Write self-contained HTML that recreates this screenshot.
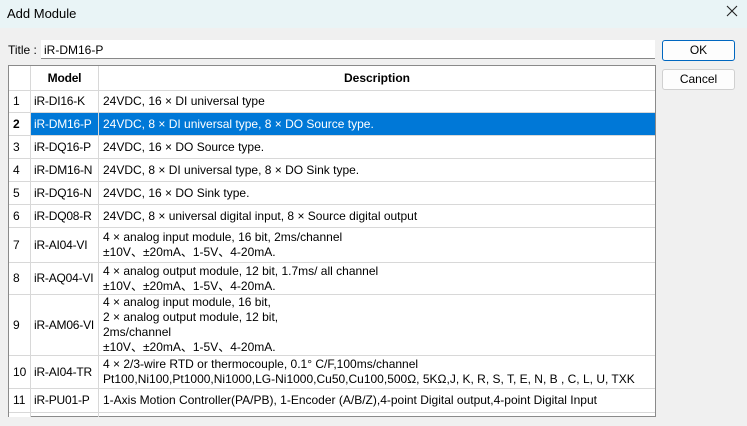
<!DOCTYPE html>
<html><head><meta charset="utf-8"><style>
*{margin:0;padding:0;box-sizing:border-box}
body{width:747px;height:426px;background:#f0f0f0;font-family:"Liberation Sans","Noto Sans CJK SC",sans-serif;font-size:12px;color:#000;position:relative;overflow:hidden}
.tb{position:absolute;left:0;top:0;width:747px;height:28px;background:#e9f4f6}
.tb .t{position:absolute;left:7px;top:6px;font-size:13px}
.tb .x{position:absolute;left:726px;top:5px}
.lbl{position:absolute;left:8px;top:43px}
.inp{position:absolute;left:41px;top:40px;width:614px;height:19px;background:#fff;border-bottom:1px solid #888;padding:3px 0 0 3px}
.btn{position:absolute;left:662px;width:73px;height:21px;background:#fdfdfd;border:1px solid #d0d0d0;border-radius:3px;text-align:center;line-height:19px}
.tbl{position:absolute;left:8px;top:65px;width:648px;height:352px;background:#fff;border:1px solid #8a8a8a}
.r{position:absolute;left:0;width:646px;border-bottom:1px solid #d8d8d8}
.c{position:absolute;top:0;bottom:0;border-right:1px solid #d8d8d8;padding:0 4px;line-height:15px;white-space:nowrap}
.n{left:0;width:22px;display:flex;align-items:center}
.m{left:22px;width:68px;display:flex;align-items:center;padding:0 3px;letter-spacing:-0.2px}
.d{left:90px;width:556px;border-right:none;display:flex;flex-direction:column;justify-content:center}
.sel .m,.sel .d{background:#0078d7;color:#fff}
.sel .n{font-weight:bold}
.h{font-weight:bold}
.h .m,.h .d{justify-content:center}
.h .d{align-items:center}
</style></head><body>
<div class="tb"><div class="t">Add Module</div>
<svg class="x" width="12" height="12" viewBox="0 0 12 12"><path d="M1 1L11 11M11 1L1 11" stroke="#222" stroke-width="1.1"/></svg></div>
<div class="lbl">Title :</div>
<div class="inp">iR-DM16-P</div>
<div class="btn" style="top:40px;border:1px solid #0067c0">OK</div>
<div class="btn" style="top:69px">Cancel</div>
<div class="tbl">
<div class="r h" style="top:0;height:25px"><div class="c n"></div><div class="c m">Model</div><div class="c d">Description</div></div>
<div class="r" style="top:25px;height:22px"><div class="c n">1</div><div class="c m">iR-DI16-K</div><div class="c d">24VDC, 16 × DI universal type</div></div>
<div class="r sel" style="top:47px;height:23px"><div class="c n">2</div><div class="c m">iR-DM16-P</div><div class="c d">24VDC, 8 × DI universal type, 8 × DO Source type.</div></div>
<div class="r" style="top:70px;height:23px"><div class="c n">3</div><div class="c m">iR-DQ16-P</div><div class="c d">24VDC, 16 × DO Source type.</div></div>
<div class="r" style="top:93px;height:23px"><div class="c n">4</div><div class="c m">iR-DM16-N</div><div class="c d">24VDC, 8 × DI universal type, 8 × DO Sink type.</div></div>
<div class="r" style="top:116px;height:23px"><div class="c n">5</div><div class="c m">iR-DQ16-N</div><div class="c d">24VDC, 16 × DO Sink type.</div></div>
<div class="r" style="top:139px;height:23px"><div class="c n">6</div><div class="c m">iR-DQ08-R</div><div class="c d">24VDC, 8 × universal digital input, 8 × Source digital output</div></div>
<div class="r" style="top:162px;height:35px"><div class="c n">7</div><div class="c m">iR-AI04-VI</div><div class="c d"><div>4 × analog input module, 16 bit, 2ms/channel</div><div>±10V、±20mA、1-5V、4-20mA.</div></div></div>
<div class="r" style="top:197px;height:32px"><div class="c n">8</div><div class="c m">iR-AQ04-VI</div><div class="c d"><div>4 × analog output module, 12 bit, 1.7ms/ all channel</div><div>±10V、±20mA、1-5V、4-20mA.</div></div></div>
<div class="r" style="top:229px;height:61px"><div class="c n">9</div><div class="c m">iR-AM06-VI</div><div class="c d"><div>4 × analog input module, 16 bit,</div><div>2 × analog output module, 12 bit,</div><div>2ms/channel</div><div>±10V、±20mA、1-5V、4-20mA.</div></div></div>
<div class="r" style="top:290px;height:33px"><div class="c n">10</div><div class="c m">iR-AI04-TR</div><div class="c d"><div>4 × 2/3-wire RTD or thermocouple, 0.1° C/F,100ms/channel</div><div>Pt100,Ni100,Pt1000,Ni1000,LG-Ni1000,Cu50,Cu100,500Ω, 5KΩ,J, K, R, S, T, E, N, B , C, L, U, TXK</div></div></div>
<div class="r" style="top:323px;height:24px"><div class="c n">11</div><div class="c m">iR-PU01-P</div><div class="c d">1-Axis Motion Controller(PA/PB), 1-Encoder (A/B/Z),4-point Digital output,4-point Digital Input</div></div>
<div class="r" style="top:347px;height:4px;border:none"><div class="c n" style="background:#fff"></div><div class="c m"></div></div>
</div>
</body></html>
